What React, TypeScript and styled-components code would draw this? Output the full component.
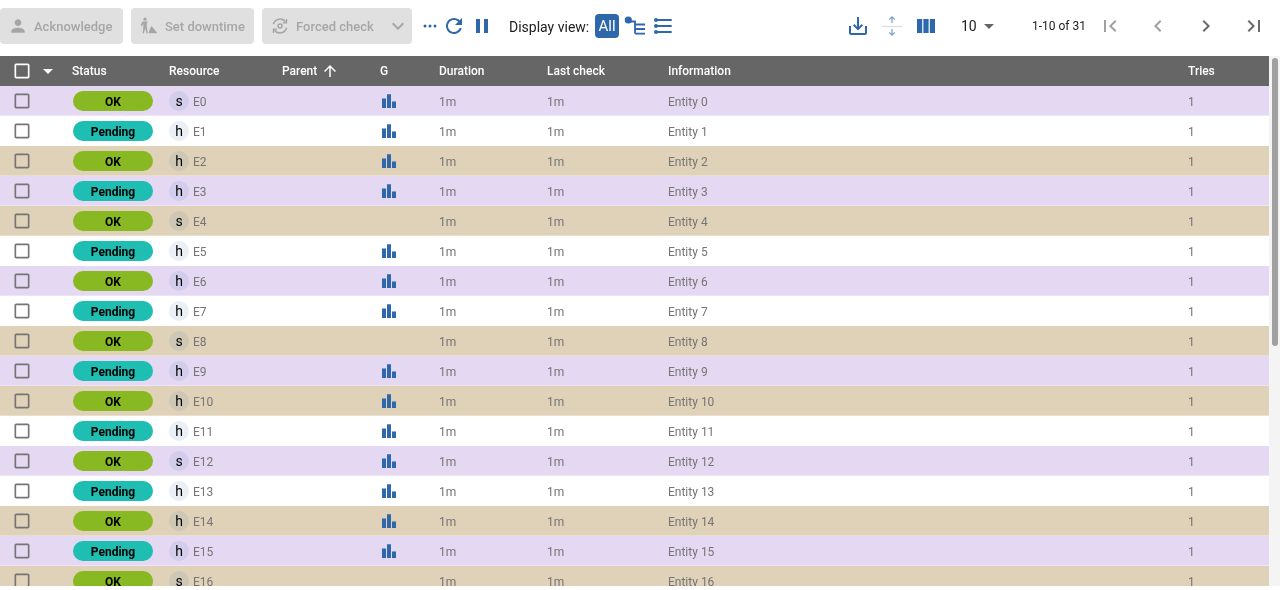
import styled, { createGlobalStyle } from "styled-components"

const GlobalStyle = createGlobalStyle`
  html, body {
    margin: 0;
    padding: 0;
    background: #fff;
    overflow: hidden;
    font-family: Roboto, "Liberation Sans", sans-serif;
  }
`

const BLUE = "#2e68aa"

const Page = styled.div`
  width: 1280px;
  height: 590px;
  display: flex;
  flex-direction: column;
  will-change: transform;
`

const Toolbar = styled.div`
  height: 56px;
  flex: none;
  display: flex;
  align-items: center;
  padding-bottom: 4px;
  box-sizing: border-box;
`

const Actions = styled.div`
  display: flex;
  gap: 8px;
`

const ActionButton = styled.div<{ $width: number }>`
  width: ${(p) => p.$width}px;
  height: 36px;
  box-sizing: border-box;
  padding-left: 8px;
  display: flex;
  align-items: center;
  gap: 6px;
  background: #e0e0e0;
  border-radius: 4px;
  color: #a6a6a6;
  font-size: 13px;
  font-weight: 500;
`

const ActionLabel = styled.span`
  padding-top: 1px;
`

const Chevron = styled.span`
  margin-left: auto;
  margin-right: 2px;
  display: flex;
`

const IconSlot = styled.div<{ $width?: number; $left?: number; $color?: string }>`
  width: ${(p) => p.$width ?? 24}px;
  margin-left: ${(p) => p.$left ?? 0}px;
  flex: none;
  display: flex;
  align-items: center;
  justify-content: center;
  color: ${(p) => p.$color ?? BLUE};
`

const ViewLabel = styled.span`
  margin-left: 15px;
  padding-top: 1px;
  width: 86px;
  font-size: 14px;
  color: #212121;
  white-space: nowrap;
`

const AllButton = styled.div`
  width: 24px;
  height: 24px;
  border-radius: 4px;
  background: ${BLUE};
  color: #fff;
  font-size: 15px;
  display: flex;
  align-items: center;
  justify-content: center;
`

const PageSize = styled.div`
  margin-left: 23px;
  width: 54px;
  display: flex;
  align-items: center;
  font-size: 14px;
  color: #212121;
`

const Caret = styled.span`
  display: flex;
  color: #666;
`

const PageRange = styled.div`
  margin-left: 17px;
  width: 60px;
  font-size: 12px;
  color: #212121;
  white-space: nowrap;
`

const TableBody = styled.div`
  height: 530px;
  flex: none;
  display: flex;
`

const TableArea = styled.div`
  flex: 1;
  min-width: 0;
  overflow: hidden;
`

const ScrollTrack = styled.div`
  width: 11px;
  flex: none;
  box-sizing: border-box;
  padding: 2px 2px 0 3px;
  background: #f4f4f4;
`

const ScrollThumb = styled.div`
  height: 288px;
  border-radius: 3px;
  background: #a0a0a0;
`

const columns = "64px 97px 113px 98px 59px 108px 121px 520px 1fr"

const HeaderRow = styled.div`
  height: 30px;
  display: grid;
  grid-template-columns: ${columns};
  align-items: center;
  background: #666;
  color: #fff;
  font-size: 12px;
  font-weight: 500;
`

const HeaderCell = styled.div`
  padding-left: 8px;
  display: flex;
  align-items: center;
  gap: 4px;
`

const SelectCell = styled.div`
  padding-left: 12px;
  display: flex;
  align-items: center;
  gap: 4px;
`

const Row = styled.div<{ $bg: string }>`
  height: 30px;
  display: grid;
  grid-template-columns: ${columns};
  align-items: center;
  background: ${(p) => p.$bg};
  box-shadow: inset 0 -1px 0 rgba(255, 255, 255, 0.3);
  color: #757575;
  font-size: 12px;
`

const Cell = styled.div`
  padding-left: 8px;
  display: flex;
  align-items: center;
`

const CellText = styled.span`
  padding-top: 2px;
`

const StatusPill = styled.div<{ $pending: boolean }>`
  width: 80px;
  height: 20px;
  box-sizing: border-box;
  padding-top: 2px;
  margin-left: 1px;
  border-radius: 10px;
  background: ${(p) => (p.$pending ? "#1ebeb3" : "#88b922")};
  color: #000;
  font-size: 12px;
  font-weight: 700;
  display: flex;
  align-items: center;
  justify-content: center;
`

const Avatar = styled.div`
  width: 20px;
  height: 20px;
  margin-right: 4px;
  border-radius: 50%;
  background: rgba(46, 104, 170, 0.1);
  color: #000;
  font-size: 14px;
  display: flex;
  align-items: center;
  justify-content: center;
`

const Icon = ({ d, size = 24 }: { d: string; size?: number }) => (
  <svg width={size} height={size} viewBox="0 0 24 24" fill="currentColor">
    <path d={d} />
  </svg>
)

const PATHS = {
  person: "M12 12c2.21 0 4-1.79 4-4s-1.79-4-4-4-4 1.79-4 4 1.79 4 4 4zm0 2c-2.67 0-8 1.34-8 4v2h16v-2c0-2.66-5.33-4-8-4z",
  refresh:
    "M17.65 6.35C16.2 4.9 14.21 4 12 4c-4.42 0-7.99 3.58-7.99 8s3.57 8 7.99 8c3.73 0 6.84-2.55 7.73-6h-2.08c-.82 2.33-3.04 4-5.65 4-3.31 0-6-2.69-6-6s2.69-6 6-6c1.66 0 3.14.69 4.22 1.78L13 11h7V4l-2.35 2.35z",
  pause: "M6 19h4V5H6v14zm8-14v14h4V5h-4z",
  save: "M19 12v7H5v-7H3v7c0 1.1.9 2 2 2h14c1.1 0 2-.9 2-2v-7h-2zm-6 .67l2.59-2.58L17 11.5l-5 5-5-5 1.41-1.41L11 12.67V3h2z",
  first: "M18.41 16.59L13.82 12l4.59-4.59L17 6l-6 6 6 6zM6 6h2v12H6z",
  prev: "M15.41 7.41L14 6l-6 6 6 6 1.41-1.41L10.83 12z",
  next: "M10 6L8.59 7.41 13.17 12l-4.58 4.59L10 18l6-6z",
  last: "M5.59 7.41L10.18 12l-4.59 4.59L7 18l6-6-6-6zM16 6h2v12h-2z",
  checkbox:
    "M19 5v14H5V5h14m0-2H5c-1.1 0-2 .9-2 2v14c0 1.1.9 2 2 2h14c1.1 0 2-.9 2-2V5c0-1.1-.9-2-2-2z",
  up: "M4 12l1.41 1.41L11 7.83V20h2V7.83l5.58 5.59L20 12l-8-8-8 8z",
  chevron: "M16.59 8.59L12 13.17 7.41 8.59 6 10l6 6 6-6z",
  caret: "M7 10l5 5 5-5z",
}

const BarsIcon = () => (
  <svg width="14" height="14" viewBox="0 0 14 14" fill="currentColor">
    <path d="M0 4.6h4V14H0zM5 .2h4V14H5zM10 7.6h4V14h-4z" />
  </svg>
)

const DowntimeIcon = () => (
  <svg width="20" height="20" viewBox="0 0 20 20" fill="currentColor">
    <circle cx="6" cy="3.2" r="1.6" />
    <path d="M3.4 5.6h5.2v1.2H7.8V11l1 6.2H7.4L6.2 12 5 17.2H3.6L4.4 11V8L2.6 10.2 1.7 9.4z" />
    <path d="M12.6 10l5.9 7.2H9.4l1.5-4.2z" />
  </svg>
)

const ForcedCheckIcon = () => (
  <svg width="20" height="20" viewBox="0 0 20 20" fill="none" stroke="currentColor" strokeWidth="1.5">
    <path d="M3.4 8.2A6.8 6.8 0 0 1 15.6 6" />
    <path d="M16.6 11.8A6.8 6.8 0 0 1 4.4 14" />
    <path d="M16.6 3v3.8h-3.8M3.4 17v-3.8h3.8" strokeWidth="1.3" />
    <circle cx="10" cy="10" r="2" />
  </svg>
)

const MoreIcon = () => (
  <svg width="14" height="4" viewBox="0 0 14 4" fill="currentColor">
    <circle cx="2" cy="2" r="1.5" />
    <circle cx="7" cy="2" r="1.5" />
    <circle cx="12" cy="2" r="1.5" />
  </svg>
)

const TreeIcon = () => (
  <svg width="22" height="22" viewBox="0 0 22 22" fill="none" stroke="currentColor" strokeWidth="1.8">
    <circle cx="4.3" cy="5" r="3.6" fill="currentColor" stroke="none" />
    <path d="M6 6.5h5V18.6" />
    <path d="M11 9.5h10M11 14h10M11 18.6h10" />
  </svg>
)

const ListIcon = () => (
  <svg width="20" height="20" viewBox="0 0 20 20" fill="currentColor">
    <circle cx="3" cy="4" r="2" />
    <circle cx="3" cy="10" r="2" />
    <circle cx="3" cy="16" r="2" />
    <path d="M3 3h15.7v2H3zM3 9h15.7v2H3zM3 15h15.7v2H3z" />
  </svg>
)

const ExpandIcon = () => (
  <svg width="20" height="22" viewBox="0 0 20 22" fill="none" stroke="#7ea2cc" strokeWidth="1.3">
    <path d="M10 8V2M7.2 4.6 10 1.8l2.8 2.8" />
    <path d="M10 14v6M7.2 17.4 10 20.2l2.8-2.8" />
    <path d="M0 11.5h20" stroke="#dcdcdc" />
  </svg>
)

const ColumnsIcon = () => (
  <svg width="18" height="14" viewBox="0 0 18 14" fill="currentColor">
    <path d="M0 0h5.2v14H0zM6.4 0h5.2v14H6.4zM12.8 0H18v14h-5.2z" />
  </svg>
)

const headers = ["Status", "Resource", "Parent", "G", "Duration", "Last check", "Information", "Tries"]
const rowColors = ["#e5d8f2", "#ffffff", "#e0d2b8", "#e5d8f2", "#e0d2b8", "#ffffff"]

const rows = Array.from({ length: 17 }, (_, i) => ({
  id: i,
  pending: i % 2 === 1,
  kind: i % 4 === 0 ? "s" : "h",
  graph: i % 4 !== 0 || i % 12 === 0,
  color: rowColors[i % 6],
}))

export default function App() {
  return (
    <Page>
      <GlobalStyle />
      <Toolbar>
        <Actions>
          <ActionButton $width={123}>
            <Icon d={PATHS.person} size={20} />
            <ActionLabel>Acknowledge</ActionLabel>
          </ActionButton>
          <ActionButton $width={123}>
            <DowntimeIcon />
            <ActionLabel>Set downtime</ActionLabel>
          </ActionButton>
          <ActionButton $width={150}>
            <ForcedCheckIcon />
            <ActionLabel>Forced check</ActionLabel>
            <Chevron>
              <Icon d={PATHS.chevron} />
            </Chevron>
          </ActionButton>
        </Actions>
        <IconSlot $left={6}>
          <MoreIcon />
        </IconSlot>
        <IconSlot>
          <Icon d={PATHS.refresh} />
        </IconSlot>
        <IconSlot $left={4}>
          <Icon d={PATHS.pause} />
        </IconSlot>
        <ViewLabel>Display view:</ViewLabel>
        <AllButton>All</AllButton>
        <IconSlot $left={4}>
          <TreeIcon />
        </IconSlot>
        <IconSlot $left={4}>
          <ListIcon />
        </IconSlot>
        <IconSlot $left={171}>
          <Icon d={PATHS.save} />
        </IconSlot>
        <IconSlot $left={10}>
          <ExpandIcon />
        </IconSlot>
        <IconSlot $left={10}>
          <ColumnsIcon />
        </IconSlot>
        <PageSize>
          10
          <Caret>
            <Icon d={PATHS.caret} />
          </Caret>
        </PageSize>
        <PageRange>1-10 of 31</PageRange>
        <IconSlot $left={6} $color="#a0a0a0">
          <Icon d={PATHS.first} />
        </IconSlot>
        <IconSlot $left={24} $color="#a0a0a0">
          <Icon d={PATHS.prev} />
        </IconSlot>
        <IconSlot $left={24} $color="#6b6b6b">
          <Icon d={PATHS.next} />
        </IconSlot>
        <IconSlot $left={24} $color="#6b6b6b">
          <Icon d={PATHS.last} />
        </IconSlot>
      </Toolbar>
      <TableBody>
        <TableArea>
          <HeaderRow>
            <SelectCell>
              <Icon d={PATHS.checkbox} size={20} />
              <Icon d={PATHS.caret} />
            </SelectCell>
            {headers.map((title) => (
              <HeaderCell key={title}>
                {title}
                {title === "Parent" && <Icon d={PATHS.up} size={18} />}
              </HeaderCell>
            ))}
          </HeaderRow>
          {rows.map((row) => (
            <Row key={row.id} $bg={row.color}>
              <SelectCell>
                <Icon d={PATHS.checkbox} size={20} />
              </SelectCell>
              <Cell>
                <StatusPill $pending={row.pending}>{row.pending ? "Pending" : "OK"}</StatusPill>
              </Cell>
              <Cell>
                <Avatar>{row.kind}</Avatar>
                <CellText>E{row.id}</CellText>
              </Cell>
              <Cell />
              <Cell>
                {row.graph && (
                  <IconSlot $width={18}>
                    <BarsIcon />
                  </IconSlot>
                )}
              </Cell>
              <Cell>
                <CellText>1m</CellText>
              </Cell>
              <Cell>
                <CellText>1m</CellText>
              </Cell>
              <Cell>
                <CellText>Entity {row.id}</CellText>
              </Cell>
              <Cell>
                <CellText>1</CellText>
              </Cell>
            </Row>
          ))}
        </TableArea>
        <ScrollTrack>
          <ScrollThumb />
        </ScrollTrack>
      </TableBody>
    </Page>
  )
}
